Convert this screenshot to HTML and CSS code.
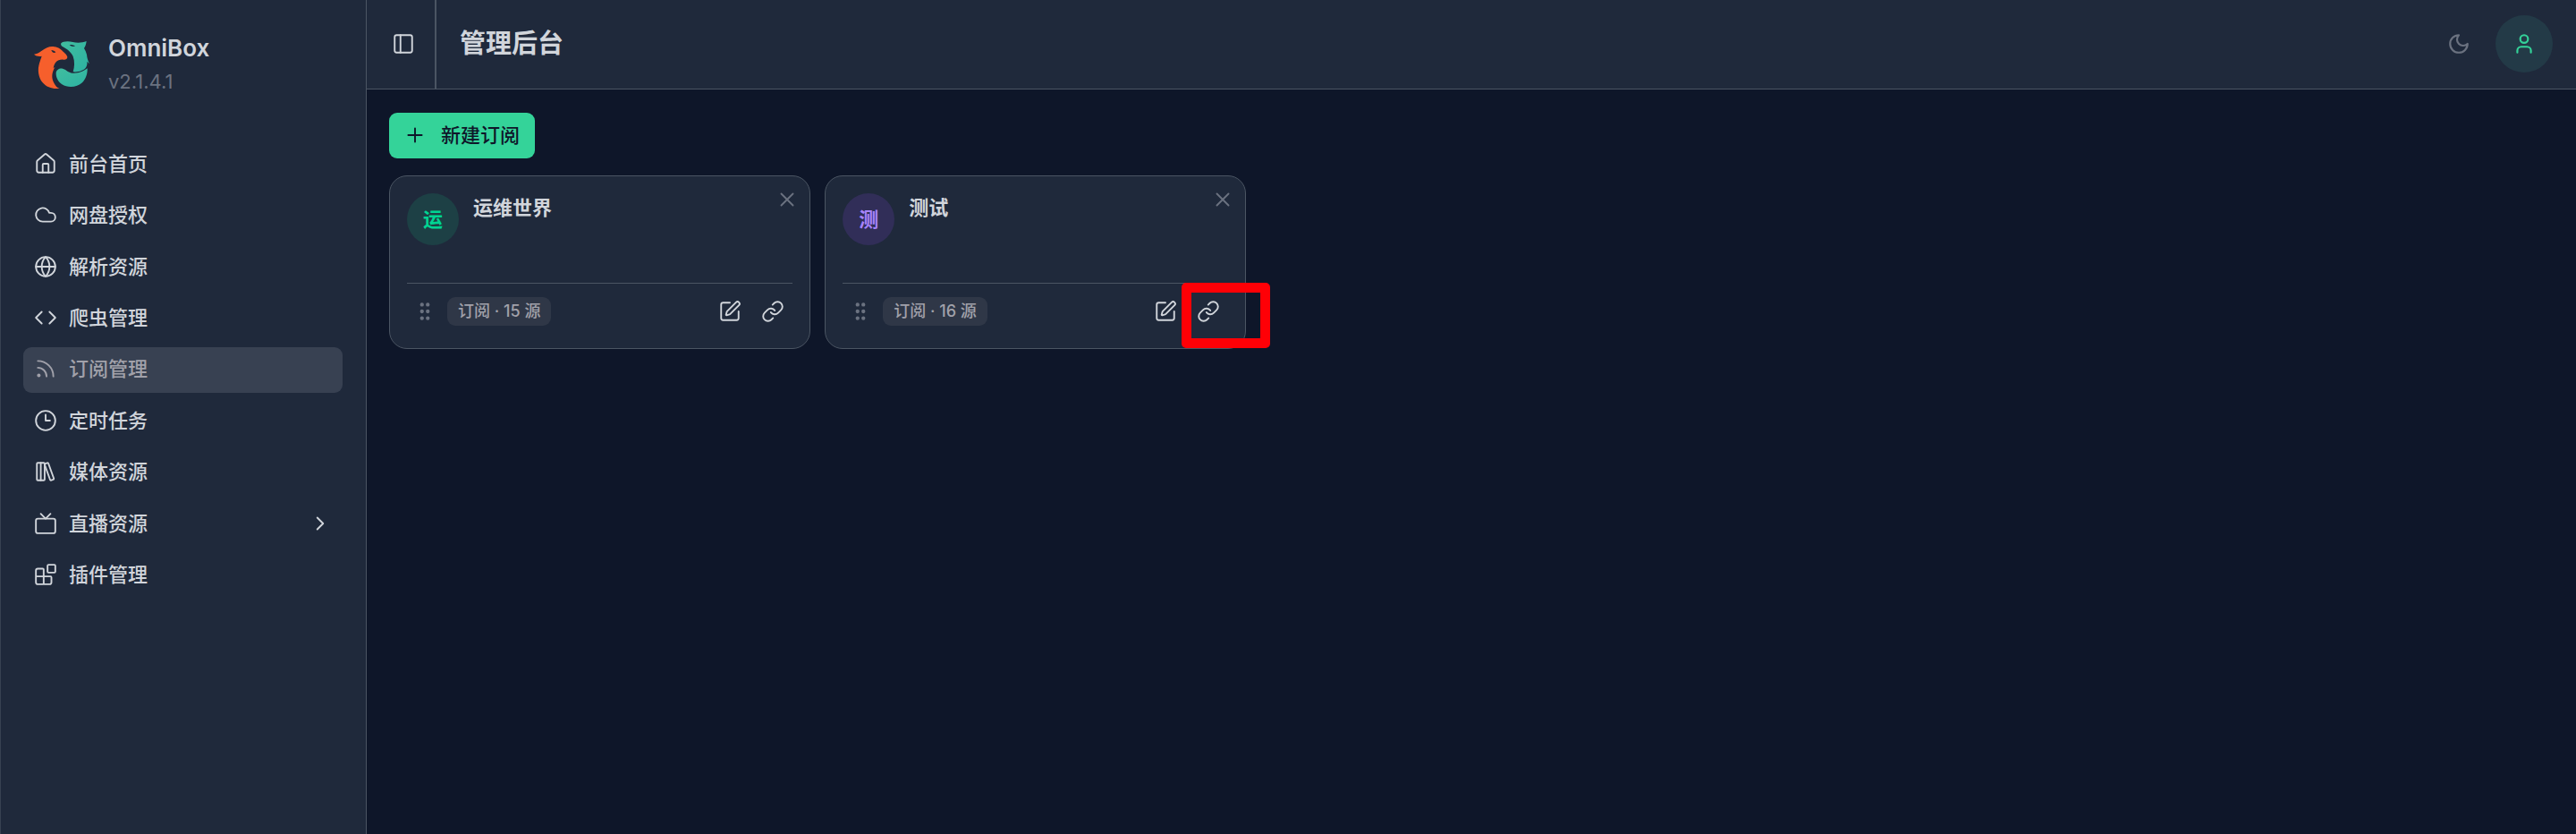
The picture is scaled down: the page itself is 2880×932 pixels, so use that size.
FILE: index.html
```html
<!DOCTYPE html>
<html lang="zh-CN">
<head>
<meta charset="utf-8">
<meta name="viewport" content="width=device-width, initial-scale=1">
<title>OmniBox 管理后台</title>
<link rel="stylesheet" href="styles.css">
</head>
<body>
<svg class="sprite" aria-hidden="true">
  <symbol id="i-grip" viewBox="0 0 24 24"><circle cx="9" cy="5" r="1"/><circle cx="9" cy="12" r="1"/><circle cx="9" cy="19" r="1"/><circle cx="15" cy="5" r="1"/><circle cx="15" cy="12" r="1"/><circle cx="15" cy="19" r="1"/></symbol>
  <symbol id="i-edit" viewBox="0 0 24 24"><path d="M12 3H5a2 2 0 0 0-2 2v14a2 2 0 0 0 2 2h14a2 2 0 0 0 2-2v-7"/><path d="M18.375 2.625a1 1 0 0 1 3 3l-9.013 9.014a2 2 0 0 1-.853.505l-2.873.84a.5.5 0 0 1-.62-.62l.84-2.873a2 2 0 0 1 .506-.852z"/></symbol>
  <symbol id="i-link" viewBox="0 0 24 24"><path d="M10 13a5 5 0 0 0 7.54.54l3-3a5 5 0 0 0-7.07-7.07l-1.72 1.71"/><path d="M14 11a5 5 0 0 0-7.54-.54l-3 3a5 5 0 0 0 7.07 7.07l1.71-1.71"/></symbol>
  <symbol id="i-x" viewBox="0 0 24 24"><path d="M18 6 6 18M6 6l12 12"/></symbol>
</svg>
<div class="app">
  <aside class="sidebar">
    <div class="brand">
      <svg class="logo" viewBox="22 42 192 168" aria-hidden="true">
        <defs><linearGradient id="teal" x1="0" y1="0" x2="1" y2="1"><stop offset="0" stop-color="#41bd9f"/><stop offset="1" stop-color="#2cb2a2"/></linearGradient></defs>
        <path fill="#f65f2c" d="M25 92C34 91 42 87 51 80C65 70 76 65 89 66C103 67 113 73 120 80C127 87 137 94 137 102C136 108 131 111 124 110C114 109 105 111 99 118C94 124 91 130 90 139L96 134C84 153 83 171 92 188C97 198 104 205 111 206C92 210 68 204 54 187C40 170 36 145 43 122C46 112 49 104 51 98C42 100 31 98 25 92Z"/>
        <path fill="#1f293b" d="M83 78C89 78 95 81 98 85C93 89 86 87 83 78Z"/>
        <path fill="url(#teal)" d="M115 56C121 49 138 47 155 51C169 54 186 54 201 48C200 57 197 66 193 72C197 78 200 85 202 93C203 104 206 113 211 124L203 116C205 131 198 142 184 147C175 151 165 152 156 151C161 135 162 115 156 99C149 84 135 74 122 67C118 65 115 61 115 56Z"/>
        <path fill="#1f293b" d="M144 60C151 59 158 61 163 64C158 67 149 66 144 60Z"/>
        <path fill="url(#teal)" d="M99 154C100 145 110 138 121 140C132 143 140 153 154 155C173 157 192 149 204 139C205 158 198 176 187 187C170 203 139 206 119 193C106 184 98 169 99 154Z"/>
      </svg>
      <div class="brand-text"><strong>OmniBox</strong><span>v2.1.4.1</span></div>
    </div>
    <nav class="nav" aria-label="主菜单">
      <a href="#"><svg class="icon" viewBox="0 0 24 24"><path d="M15 21v-8a1 1 0 0 0-1-1h-4a1 1 0 0 0-1 1v8"/><path d="M3 10a2 2 0 0 1 .709-1.528l7-6a2 2 0 0 1 2.582 0l7 6A2 2 0 0 1 21 10v9a2 2 0 0 1-2 2H5a2 2 0 0 1-2-2z"/></svg><span>前台首页</span></a>
      <a href="#"><svg class="icon" viewBox="0 0 24 24"><path d="M17.5 19H9a7 7 0 1 1 6.71-9h1.79a4.5 4.5 0 1 1 0 9Z"/></svg><span>网盘授权</span></a>
      <a href="#"><svg class="icon" viewBox="0 0 24 24"><circle cx="12" cy="12" r="10"/><path d="M12 2a14.5 14.5 0 0 0 0 20 14.5 14.5 0 0 0 0-20M2 12h20"/></svg><span>解析资源</span></a>
      <a href="#"><svg class="icon" viewBox="0 0 24 24"><path d="m16 18 6-6-6-6M8 6l-6 6 6 6"/></svg><span>爬虫管理</span></a>
      <a href="#" class="active" aria-current="page"><svg class="icon" viewBox="0 0 24 24"><path d="M4 11a9 9 0 0 1 9 9M4 4a16 16 0 0 1 16 16"/><circle cx="5" cy="19" r="1"/></svg><span>订阅管理</span></a>
      <a href="#"><svg class="icon" viewBox="0 0 24 24"><circle cx="12" cy="12" r="10"/><path d="M12 6v6h4.500"/></svg><span>定时任务</span></a>
      <a href="#"><svg class="icon" viewBox="0 0 24 24"><rect width="8" height="18" x="3" y="3" rx="1"/><path d="M7 3v18M20.400 18.900c.2.500-.1 1.100-.6 1.300l-1.900.7c-.5.200-1.100-.1-1.300-.6L11.100 5.100c-.2-.5.100-1.100.6-1.300l1.900-.7c.5-.2 1.100.1 1.300.6Z"/></svg><span>媒体资源</span></a>
      <a href="#"><svg class="icon" viewBox="0 0 24 24"><path d="m17 2-5 5-5-5"/><rect width="20" height="15" x="2" y="7" rx="2"/></svg><span>直播资源</span><svg class="icon chevron" viewBox="0 0 24 24"><path d="m9 18 6-6-6-6"/></svg></a>
      <a href="#"><svg class="icon" viewBox="0 0 24 24"><path d="M10 22V7a1 1 0 0 0-1-1H4a2 2 0 0 0-2 2v12a2 2 0 0 0 2 2h12a2 2 0 0 0 2-2v-5a1 1 0 0 0-1-1H2"/><rect x="14" y="2" width="8" height="8" rx="1"/></svg><span>插件管理</span></a>
    </nav>
  </aside>
  <div class="page">
    <header class="topbar">
      <button class="toggle" type="button" aria-label="折叠侧栏"><svg class="icon" viewBox="0 0 24 24"><rect width="18" height="18" x="3" y="3" rx="2"/><path d="M9 3v18"/></svg></button>
      <h1>管理后台</h1>
      <div class="tools">
        <button class="theme" type="button" aria-label="切换主题"><svg class="icon" viewBox="0 0 24 24"><path d="M12 3a6 6 0 0 0 9 9 9 9 0 1 1-9-9Z"/></svg></button>
        <button class="user" type="button" aria-label="用户"><svg class="icon" viewBox="0 0 24 24"><path d="M19 21v-2a4 4 0 0 0-4-4H9a4 4 0 0 0-4 4v2"/><circle cx="12" cy="7" r="4"/></svg></button>
      </div>
    </header>
    <main class="content">
      <button class="create" type="button"><svg class="icon" viewBox="0 0 24 24"><path d="M5 12h14M12 5v14"/></svg><span>新建订阅</span></button>
      <section class="cards">
        <article class="card">
          <div class="card-head">
            <span class="avatar green">运</span><h2>运维世界</h2>
            <button type="button" class="close" aria-label="删除"><svg class="icon"><use href="#i-x"/></svg></button>
          </div>
          <div class="card-foot">
            <svg class="icon grip"><use href="#i-grip"/></svg><span class="badge">订阅 · 15 源</span>
            <div class="actions">
              <button type="button" aria-label="编辑"><svg class="icon"><use href="#i-edit"/></svg></button>
              <button type="button" aria-label="链接"><svg class="icon"><use href="#i-link"/></svg></button>
            </div>
          </div>
        </article>
        <article class="card">
          <div class="card-head">
            <span class="avatar violet">测</span><h2>测试</h2>
            <button type="button" class="close" aria-label="删除"><svg class="icon"><use href="#i-x"/></svg></button>
          </div>
          <div class="card-foot">
            <svg class="icon grip"><use href="#i-grip"/></svg><span class="badge">订阅 · 16 源</span>
            <div class="actions">
              <button type="button" aria-label="编辑"><svg class="icon"><use href="#i-edit"/></svg></button>
              <button type="button" aria-label="链接"><svg class="icon"><use href="#i-link"/></svg></button>
            </div>
          </div>
          <span class="marker"></span>
        </article>
      </section>
    </main>
  </div>
</div>
</body>
</html>
```
FILE: styles.css
```css
:root {
  --surface: #1f293b;
  --bg: #0e1629;
  --line: #4b5563;
  --text: #d1d5db;
  --muted: #6b7280;
}

* { box-sizing: border-box; }

body {
  margin: 0;
  background: var(--bg);
  color: var(--text);
  font-family: Inter, "Noto Sans CJK SC", sans-serif;
  font-size: 22px;
  line-height: 32px;
}

h1, h2 { margin: 0; }

button {
  display: flex;
  align-items: center;
  justify-content: center;
  padding: 0;
  border: 0;
  background: none;
  color: inherit;
  font: inherit;
}

.sprite { position: absolute; width: 0; height: 0; }

.icon {
  flex: none;
  width: 26px;
  height: 26px;
  fill: none;
  stroke: currentColor;
  stroke-width: 1.75;
  stroke-linecap: round;
  stroke-linejoin: round;
}

.app { display: flex; min-height: 100vh; }

.sidebar {
  flex: none;
  width: 410px;
  padding: 36px 26px 26px 25px;
  background: var(--surface);
  border-left: 1px solid #374151;
  border-right: 1px solid var(--line);
}

.brand {
  display: flex;
  align-items: center;
  gap: 20px;
  padding-left: 11px;
  margin-bottom: 50px;
}

.logo { width: 64px; height: 56px; }

.brand-text { display: flex; flex-direction: column; gap: 2px; }
.brand-text strong { font-size: 26px; font-weight: 600; line-height: 36px; }
.brand-text span { color: var(--muted); line-height: 34px; }

.nav {
  display: grid;
  grid-auto-rows: 1fr;
  gap: 6px;
  min-height: 511px;
}

.nav a {
  display: flex;
  align-items: center;
  gap: 13px;
  padding: 0 12px 2px;
  border-radius: 9px;
  color: inherit;
  font-weight: 500;
  text-decoration: none;
}

.nav a.active { background: #384152; color: #a1a1aa; }
.nav .chevron { margin-left: auto; }

.page { flex: 1; min-width: 0; }

.topbar {
  display: flex;
  align-items: center;
  height: 100px;
  padding-right: 26px;
  background: var(--surface);
  border-bottom: 1px solid var(--line);
}

.toggle {
  align-self: stretch;
  width: 78px;
  padding: 0 0 2px 6px;
  border-right: 2px solid var(--line);
}

.topbar h1 { margin-left: 26px; padding-bottom: 2px; font-size: 29px; line-height: 40px; }

.tools { display: flex; align-items: center; gap: 28px; margin-left: auto; padding-bottom: 1px; }
.theme { color: var(--muted); }
.user { width: 64px; height: 64px; border-radius: 50%; background: #233a47; color: #34d399; }
.user .icon, .theme .icon { stroke-width: 2; }

.content { padding: 26px 25px; }

.create {
  height: 51px;
  gap: 16px;
  padding: 0 17px 2px 16px;
  border-radius: 9px;
  background: #34d399;
  color: var(--bg);
  font-weight: 500;
}

.cards {
  display: grid;
  grid-template-columns: repeat(5, minmax(0, 1fr));
  gap: 16px;
  margin-top: 19px;
}

.card {
  position: relative;
  padding: 19px 19px 25px;
  background: var(--surface);
  border: 1px solid var(--line);
  border-radius: 20px;
}

.card-head {
  display: flex;
  align-items: flex-start;
  gap: 16px;
  min-height: 100px;
}

.card h2 { font-size: 22px; line-height: 32px; }

.avatar {
  display: grid;
  place-items: center;
  width: 58px;
  height: 58px;
  border-radius: 50%;
  font-weight: 600;
}

.green { background: #1d4045; color: #00d492; }
.violet { background: #312e58; color: #a684ff; }

.close {
  position: absolute;
  top: 13px;
  right: 12px;
  color: var(--muted);
}

.card-foot {
  display: flex;
  align-items: center;
  padding: 15px 9px 0 7px;
  border-top: 1px solid var(--line);
}

.grip { color: var(--muted); fill: currentColor; stroke-width: 2; }

.badge {
  margin-left: 12px;
  padding: 0 12px;
  border-radius: 9px;
  background: #2f3747;
  color: #a1a1aa;
  font-size: 18px;
  font-weight: 500;
}

.actions { display: flex; gap: 22px; margin-left: auto; }

.marker {
  position: absolute;
  right: -28px;
  bottom: 0;
  width: 99px;
  height: 73px;
  border: 11px solid #ff0006;
  border-radius: 5px;
  pointer-events: none;
}
```
